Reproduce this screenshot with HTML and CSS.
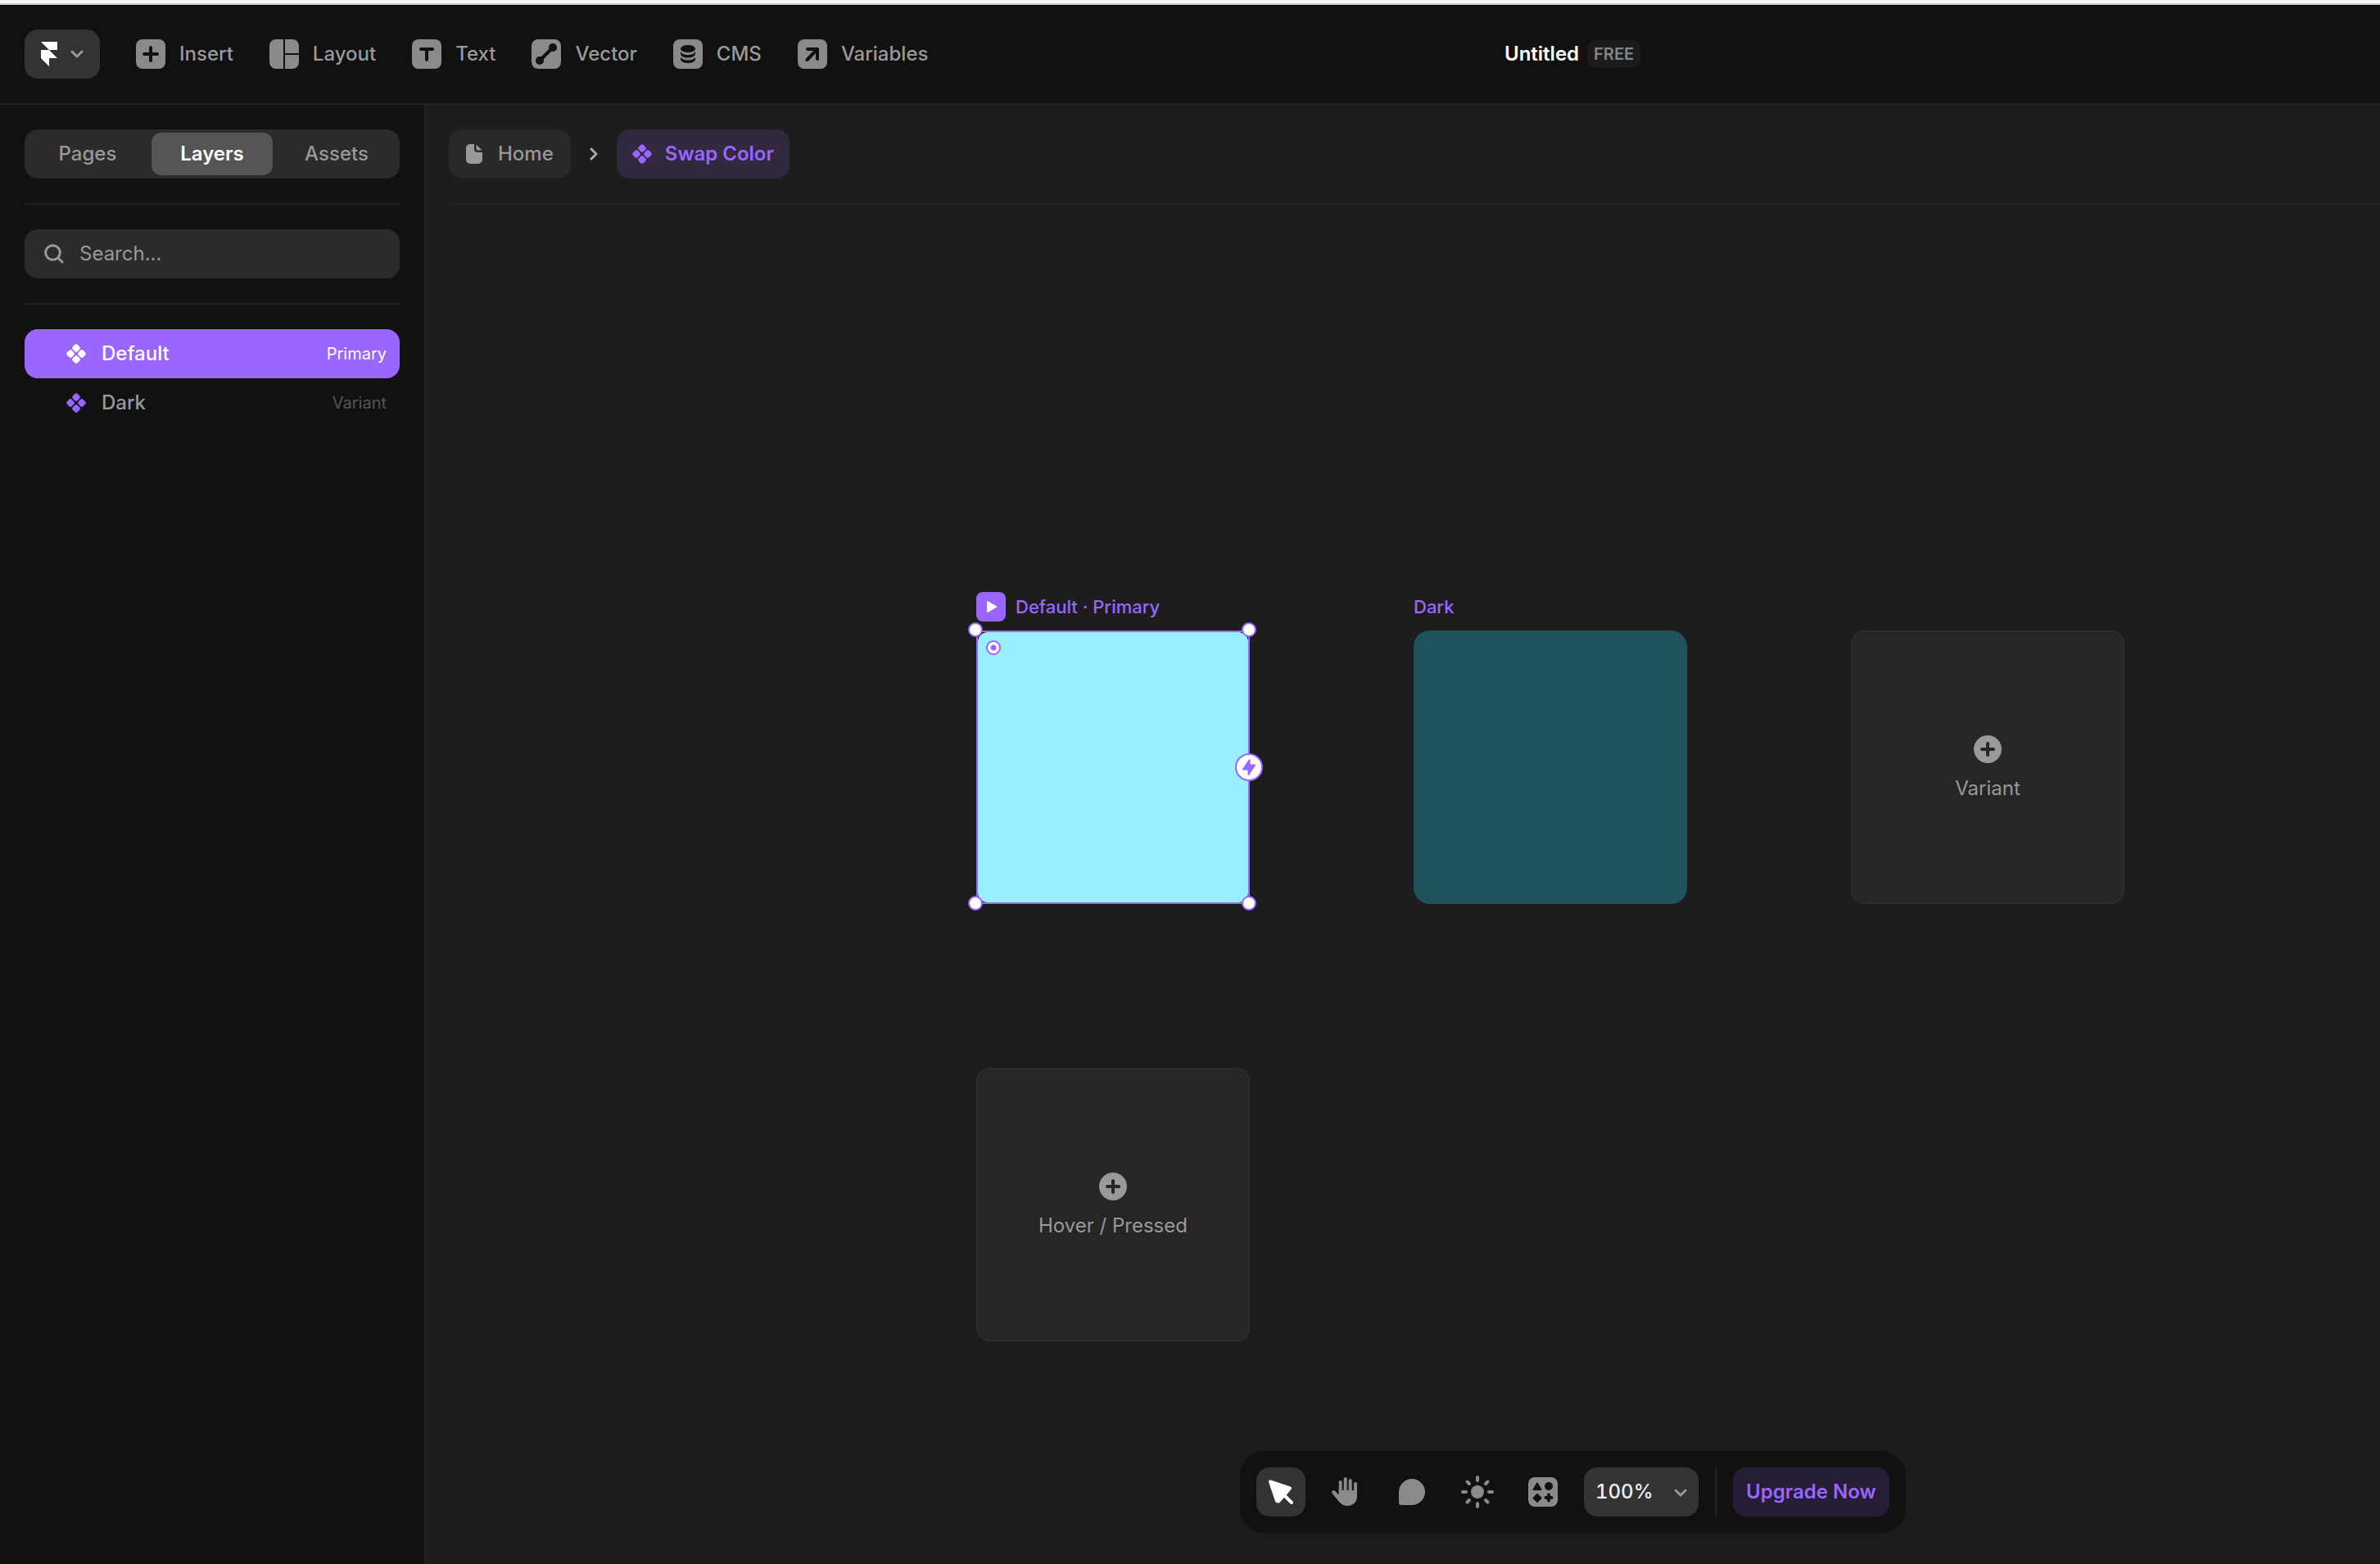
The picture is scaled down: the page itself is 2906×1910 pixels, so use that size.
FILE: index.html
```html
<!DOCTYPE html>
<html lang="en">
<head>
<meta charset="utf-8">
<title>Untitled</title>
<link rel="stylesheet" href="styles.css">
</head>
<body>
<svg class="defs" width="0" height="0" aria-hidden="true">
  <symbol id="component" viewBox="0 0 24 24">
    <g fill="currentColor" transform="rotate(45 12 12)">
      <rect x="3" y="3" width="8.2" height="8.2" rx="2.6"/>
      <rect x="12.8" y="3" width="8.2" height="8.2" rx="2.6"/>
      <rect x="3" y="12.8" width="8.2" height="8.2" rx="2.6"/>
      <rect x="12.8" y="12.8" width="8.2" height="8.2" rx="2.6"/>
    </g>
  </symbol>
  <symbol id="chevron" viewBox="0 0 16 10">
    <path d="M2 2l6 6 6-6" fill="none" stroke="currentColor" stroke-width="3" stroke-linecap="round" stroke-linejoin="round"/>
  </symbol>
  <symbol id="plus-circle" viewBox="0 0 34 34">
    <circle cx="17" cy="17" r="17" fill="#999"/>
    <path d="M17 10v14M10 17h14" stroke="#262626" stroke-width="4" stroke-linecap="round"/>
  </symbol>
</svg>

<div class="window-edge"></div>

<header class="topbar">
  <button class="menu-button" type="button" aria-label="Main menu">
    <svg class="logo" viewBox="0 0 20 30"><path fill="#fff" d="M0 0h20v10H10zM0 10h10l10 10H0zM0 20h10v10z"/></svg>
    <svg class="chevron"><use href="#chevron"/></svg>
  </button>
  <nav class="tools" aria-label="Tools">
    <button class="tool" type="button">
      <svg class="tool-icon" viewBox="0 0 36 36"><rect width="36" height="36" rx="8" fill="#8a8a8a"/><path d="M18 10v16M10 18h16" stroke="#111" stroke-width="4" stroke-linecap="round"/></svg>
      Insert
    </button>
    <button class="tool" type="button">
      <svg class="tool-icon" viewBox="0 0 36 36" fill="#8a8a8a"><path d="M8 0h9v36H8a8 8 0 0 1-8-8V8a8 8 0 0 1 8-8zM19 0h9a8 8 0 0 1 8 8v9H19zM19 19h17v9a8 8 0 0 1-8 8h-9z"/></svg>
      Layout
    </button>
    <button class="tool" type="button">
      <svg class="tool-icon" viewBox="0 0 36 36"><rect width="36" height="36" rx="8" fill="#8a8a8a"/><path d="M11 12h14M18 12v13" stroke="#111" stroke-width="4" stroke-linecap="round"/></svg>
      Text
    </button>
    <button class="tool" type="button">
      <svg class="tool-icon" viewBox="0 0 36 36"><rect width="36" height="36" rx="8" fill="#8a8a8a"/><path d="M10 26L26 10" stroke="#111" stroke-width="4"/><circle cx="10" cy="26" r="5" fill="#111"/><circle cx="26" cy="10" r="5" fill="#111"/></svg>
      Vector
    </button>
    <button class="tool" type="button">
      <svg class="tool-icon" viewBox="0 0 36 36"><rect width="36" height="36" rx="8" fill="#8a8a8a"/><ellipse cx="18" cy="11.500" rx="9" ry="4.500" fill="#111"/><path d="M9 15c1 2.800 5 4 9 4s8-1.200 9-4v2.500c0 3-4 5-9 5s-9-2-9-5zM9 21.500c1 2.800 5 4 9 4s8-1.200 9-4V24c0 3-4 5-9 5s-9-2-9-5z" fill="#111"/></svg>
      CMS
    </button>
    <button class="tool" type="button">
      <svg class="tool-icon" viewBox="0 0 36 36"><rect width="36" height="36" rx="8" fill="#8a8a8a"/><path d="M12 12h12v12M23.500 12.500L11.500 25" fill="none" stroke="#111" stroke-width="4" stroke-linecap="round" stroke-linejoin="round"/></svg>
      Variables
    </button>
  </nav>
  <div class="project">
    <h1 class="project-name">Untitled</h1>
    <span class="plan">FREE</span>
  </div>
</header>

<div class="workspace">
  <aside class="sidebar">
    <div class="tabs" role="tablist">
      <button class="tab" type="button" role="tab">Pages</button>
      <button class="tab tab-active" type="button" role="tab" aria-selected="true">Layers</button>
      <button class="tab" type="button" role="tab">Assets</button>
    </div>
    <div class="section">
      <label class="search">
        <svg class="search-icon" viewBox="0 0 24 24" aria-hidden="true"><circle cx="10.500" cy="10.500" r="8.800" fill="none" stroke="#999" stroke-width="3"/><path d="M17 17l5 5" stroke="#999" stroke-width="3" stroke-linecap="round"/></svg>
        <input class="search-input" type="search" placeholder="Search..." aria-label="Search layers">
      </label>
    </div>
    <ul class="section layers">
      <li><button class="layer layer-active" type="button"><svg class="component-icon"><use href="#component"/></svg><span class="layer-name">Default</span><span class="layer-kind">Primary</span></button></li>
      <li><button class="layer" type="button"><svg class="component-icon"><use href="#component"/></svg><span class="layer-name">Dark</span><span class="layer-kind">Variant</span></button></li>
    </ul>
  </aside>

  <main class="stage">
    <nav class="breadcrumb" aria-label="Breadcrumb">
      <button class="crumb" type="button">
        <svg class="page-icon" viewBox="0 0 20 24" fill="#999"><path d="M5 0h5v6a4 4 0 0 0 4 4h6v9a5 5 0 0 1-5 5H5a5 5 0 0 1-5-5V5a5 5 0 0 1 5-5z"/><path d="M12.500 0.500L19.500 7.500H14a1.500 1.500 0 0 1-1.500-1.500z"/></svg>
        Home
      </button>
      <svg class="crumb-arrow" viewBox="0 0 10 16"><path d="M2 2l6 6-6 6" fill="none" stroke="#aaa" stroke-width="3" stroke-linecap="round" stroke-linejoin="round"/></svg>
      <button class="crumb crumb-current" type="button">
        <svg class="component-icon"><use href="#component"/></svg>
        Swap Color
      </button>
    </nav>

    <div class="canvas">
      <div class="node node-default">
        <div class="node-label">
          <button class="play" type="button" aria-label="Preview"><svg class="play-icon" viewBox="0 0 12 14"><path d="M1 1v12l10-6z" fill="#fff" stroke="#fff" stroke-width="2" stroke-linejoin="round"/></svg></button>
          Default · Primary
        </div>
        <div class="selection">
          <div class="swatch swatch-light"></div>
          <span class="radius-handle"></span>
          <span class="handle handle-nw"></span>
          <span class="handle handle-ne"></span>
          <span class="handle handle-sw"></span>
          <span class="handle handle-se"></span>
          <button class="bolt" type="button" aria-label="Add interaction"><svg class="bolt-icon" viewBox="0 0 16 20"><path d="M8.500 1.200V7.500H15L7.500 18.800V12.500H1z" fill="#96f" stroke="#96f" stroke-width="2" stroke-linejoin="round"/></svg></button>
        </div>
      </div>
      <div class="node node-dark">
        <div class="node-label">Dark</div>
        <div class="swatch swatch-dark"></div>
      </div>
      <button class="placeholder add-variant" type="button">
        <svg class="plus"><use href="#plus-circle"/></svg>
        Variant
      </button>
      <button class="placeholder add-state" type="button">
        <svg class="plus"><use href="#plus-circle"/></svg>
        Hover / Pressed
      </button>
    </div>

    <div class="dock" role="toolbar" aria-label="Canvas">
      <button class="dock-button dock-active" type="button" aria-label="Select">
        <svg viewBox="0 0 60 60"><path d="M17 17.300L41 25.500 34 34 27.200 41.500 25 41z" fill="#fff" stroke="#fff" stroke-width="4" stroke-linejoin="round"/><path d="M33 33l10 10" stroke="#fff" stroke-width="4" stroke-linecap="round"/></svg>
      </button>
      <button class="dock-button" type="button" aria-label="Pan">
        <svg viewBox="0 0 60 60"><path d="M22.700 30V18M28.700 30V14M34.700 30V16M41 30V20" stroke="#8a8a8a" stroke-width="4" stroke-linecap="round"/><path d="M20.700 28H43v7.500C43 42 38 47 31.500 47c-4.500 0-7.800-1.800-10.200-4.700L12.600 31.700a2.200 2.200 0 0 1 3.500-2.800l4.600 4.600z" fill="#8a8a8a"/></svg>
      </button>
      <button class="dock-button" type="button" aria-label="Comment">
        <svg viewBox="0 0 60 60"><path d="M30 14a16 16 0 0 1 0 32H17a3 3 0 0 1-3-3V30a16 16 0 0 1 16-16z" fill="#8a8a8a"/></svg>
      </button>
      <button class="dock-button" type="button" aria-label="Theme">
        <svg viewBox="0 0 60 60"><circle cx="30" cy="30" r="8" fill="#8a8a8a"/><path d="M30 12v4M30 44v4M12 30h4M44 30h4M17.500 17.500l2.500 2.500M40 40l2.500 2.500M17.500 42.500L20 40M40 20l2.500-2.500" stroke="#8a8a8a" stroke-width="4" stroke-linecap="round"/></svg>
      </button>
      <button class="dock-button" type="button" aria-label="Assets">
        <svg viewBox="0 0 60 60"><rect x="12" y="12" width="36" height="36" rx="8" fill="#8a8a8a"/><g fill="#111" stroke="#111" stroke-linejoin="round"><path d="M23 19.500l-4.500 7.500h9z" stroke-width="2"/><circle cx="37" cy="23" r="5" stroke="none"/><path d="M23 33l4.500 4.500L23 42l-4.500-4.500z" stroke-width="2"/><path d="M37 33.500v7M33.500 37h7" stroke-width="4" stroke-linecap="round"/></g></svg>
      </button>
      <div class="zoom">
        <select class="zoom-select" aria-label="Zoom">
          <option>100%</option>
        </select>
        <svg class="chevron zoom-chevron"><use href="#chevron"/></svg>
      </div>
      <span class="dock-divider"></span>
      <button class="upgrade" type="button">Upgrade Now</button>
    </div>
  </main>
</div>
</body>
</html>
```
FILE: styles.css
```css
* { box-sizing: border-box; }

body {
  margin: 0;
  min-height: 100vh;
  display: flex;
  flex-direction: column;
  background: #111;
  color: #999;
  font: 500 24px/30px Inter, "Liberation Sans", sans-serif;
  overflow: hidden;
}

button, input, select {
  margin: 0;
  padding: 0;
  border: 0;
  background: none;
  color: inherit;
  font: inherit;
}

svg { display: block; flex: none; }
.defs { position: absolute; }

.window-edge {
  height: 6px;
  background: #f5f5f5;
  border-bottom: 2px solid #c8cac8;
}

/* Top bar */
.topbar {
  display: flex;
  align-items: center;
  height: 122px;
  padding: 0 30px;
  border-bottom: 2px solid #222;
}

.menu-button {
  display: flex;
  align-items: center;
  gap: 16px;
  height: 60px;
  padding: 0 20px;
  border-radius: 16px;
  background: #333;
}
.logo { width: 20px; height: 30px; }
.chevron { width: 16px; height: 10px; color: #999; }

.tools {
  display: flex;
  gap: 44px;
  width: 1012px;
  margin-left: 44px;
}
.tool { display: flex; align-items: center; gap: 17px; }
.tool-icon { width: 36px; height: 36px; }

.project { display: flex; align-items: center; gap: 10px; margin-left: 659px; }
.project-name { margin: 0; color: #fff; font-size: 24px; font-weight: 600; }
.plan {
  padding: 2px 8px;
  border-radius: 10px;
  background: #1b1b1b;
  color: #858585;
  font-size: 20px;
  font-weight: 600;
}

/* Work area */
.workspace { flex: 1; display: grid; grid-template-columns: 520px 1fr; }

.sidebar { padding: 30px; border-right: 2px solid #222; }

.tabs {
  display: grid;
  grid-template-columns: repeat(3, 1fr);
  gap: 4px;
  padding: 4px 3px;
  border-radius: 16px;
  background: #2b2b2b;
}
.tab { height: 52px; border-radius: 12px; }
.tab-active { background: #555; color: #fff; font-weight: 600; }

.section { margin: 30px 0 0; padding: 30px 0 0; border-top: 2px solid #222; }

.search {
  display: flex;
  align-items: center;
  gap: 19px;
  height: 60px;
  padding: 0 24px;
  border-radius: 16px;
  background: #2b2b2b;
}
.search-icon { width: 24px; height: 24px; }
.search-input { flex: 1; min-width: 0; outline: 0; font-weight: 400; appearance: none; }
.search-input::placeholder { color: #999; opacity: 1; }

.layers { list-style: none; }
.layer {
  display: flex;
  align-items: center;
  width: 100%;
  height: 60px;
  padding: 0 16px 0 51px;
  border-radius: 16px;
  text-align: left;
}
.layer-active { background: #96f; color: #fff; }
.component-icon { width: 24px; height: 24px; color: #96f; }
.layer-active .component-icon { color: #fff; }
.layer-name { flex: 1; margin-left: 19px; }
.layer-kind { color: #555; font-size: 20px; font-weight: 400; }
.layer-active .layer-kind { color: #fff; }

/* Stage */
.stage {
  position: relative;
  display: flex;
  flex-direction: column;
  padding-left: 28px;
  background: #1d1d1d;
}

.breadcrumb {
  display: flex;
  align-items: center;
  gap: 23px;
  padding: 30px 0;
  border-bottom: 2px solid #242424;
}
.crumb {
  display: flex;
  align-items: center;
  gap: 19px;
  height: 60px;
  padding: 0 21px;
  border-radius: 16px;
  background: #282828;
}
.crumb-current {
  gap: 16px;
  padding: 0 19px;
  background: #32283f;
  color: #96f;
  font-weight: 600;
}
.page-icon { width: 20px; height: 24px; }
.crumb-arrow { width: 10px; height: 16px; }

/* Items placed on the free canvas */
.canvas { position: relative; flex: 1; }
.node, .placeholder { position: absolute; width: 334px; }
.node-default { left: 644px; top: 473px; }
.node-dark { left: 1178px; top: 473px; }
.add-variant { left: 1712px; top: 520px; }
.add-state { left: 644px; top: 1054px; }

.node-label {
  display: flex;
  align-items: center;
  gap: 12px;
  height: 36px;
  margin-bottom: 11px;
  color: #96f;
  font-size: 22px;
}
.play {
  display: grid;
  place-items: center;
  width: 36px;
  height: 36px;
  border-radius: 8px;
  background: #96f;
}
.play-icon { width: 12px; height: 14px; margin-left: 2px; }

.swatch { height: 334px; border-radius: 20px; }
.swatch-dark { background: #20525c; }
.swatch-light { height: 330px; border-radius: 12px; background: #99eeff; }
.selection { position: relative; border: 2px solid #96f; }

.handle, .radius-handle {
  position: absolute;
  width: 18px;
  height: 18px;
  border: 2px solid #96f;
  border-radius: 50%;
  background: #fff;
}
.handle-nw { left: -12px; top: -12px; }
.handle-ne { right: -10px; top: -12px; }
.handle-sw { left: -12px; bottom: -10px; }
.handle-se { right: -10px; bottom: -10px; }
.radius-handle {
  left: 10px;
  top: 10px;
  background: radial-gradient(circle, #96f 3px, #fff 4px);
}
.bolt {
  position: absolute;
  right: -18px;
  top: 148px;
  display: grid;
  place-items: center;
  width: 34px;
  height: 34px;
  border: 2px solid #96f;
  border-radius: 50%;
  background: #fff;
}
.bolt-icon { width: 16px; height: 20px; }

.placeholder {
  display: flex;
  flex-direction: column;
  align-items: center;
  justify-content: center;
  gap: 16px;
  height: 334px;
  padding-top: 2px;
  border: 2px solid #2d2d2d;
  border-radius: 16px;
  background: #262626;
  font-weight: 400;
}
.plus { width: 34px; height: 34px; }

/* Floating dock over the canvas */
.dock {
  position: absolute;
  left: 994px;
  bottom: 38px;
  display: flex;
  align-items: center;
  gap: 20px;
  padding: 20px;
  border-radius: 30px;
  background: #111;
  box-shadow: 0 4px 20px rgba(0, 0, 0, 0.1);
}
.dock-button { width: 60px; height: 60px; border-radius: 16px; }
.dock-active { background: #333; }
.zoom { position: relative; }
.zoom-select {
  display: block;
  width: 140px;
  height: 60px;
  padding-left: 14px;
  border-radius: 16px;
  background: #333;
  color: #eee;
  font-variant-numeric: tabular-nums;
  appearance: none;
}
.zoom-chevron { position: absolute; right: 14px; top: 26px; pointer-events: none; }
.dock-divider { width: 2px; height: 60px; background: #222; }
.upgrade {
  height: 60px;
  padding: 0 16px;
  border-radius: 16px;
  background: #251c36;
  color: #96f;
  font-weight: 600;
}
```
